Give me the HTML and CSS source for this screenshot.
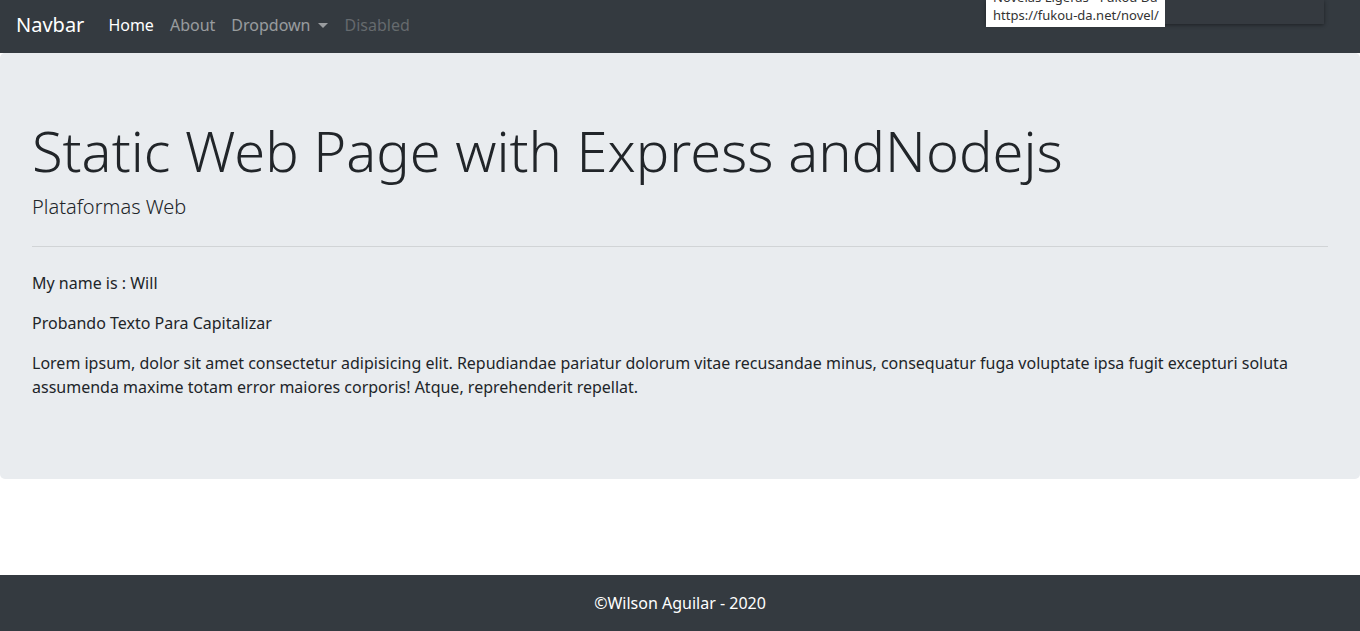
FILE: index.html
```html
<!DOCTYPE html>
<html lang="es">
<head>
<meta charset="utf-8">
<title>Static Web Page</title>
<link rel="stylesheet" href="styles.css">
</head>
<body>
<div class="page">
  <nav class="navbar">
    <a class="brand" href="#">Navbar</a>
    <ul class="nav">
      <li><a class="nav-link active" href="#">Home</a></li>
      <li><a class="nav-link" href="#">About</a></li>
      <li><a class="nav-link dropdown" href="#">Dropdown</a></li>
      <li><a class="nav-link disabled" href="#">Disabled</a></li>
    </ul>
  </nav>

  <main class="jumbotron">
    <h1 class="display">Static Web Page with Express andNodejs</h1>
    <p class="lead">Plataformas Web</p>
    <hr class="divider">
    <p>My name is : Will</p>
    <p>Probando Texto Para Capitalizar</p>
    <p>Lorem ipsum, dolor sit amet consectetur adipisicing elit. Repudiandae pariatur dolorum vitae recusandae minus, consequatur fuga voluptate ipsa fugit excepturi soluta assumenda maxime totam error maiores corporis! Atque, reprehenderit repellat.</p>
  </main>

  <footer class="footer">©Wilson Aguilar - 2020</footer>
</div>

<div class="tip-shadow"></div>
<div class="tooltip">
  <span class="tip-line">Novelas Ligeras - Fukou Da</span>
  <span class="tip-line">https://fukou-da.net/novel/</span>
</div>
</body>
</html>
```

FILE: styles.css
```css
* { box-sizing: border-box; }

html, body {
  margin: 0;
  padding: 0;
}

body {
  font-family: "Noto Sans", "Liberation Sans", sans-serif;
  font-size: 16px;
  line-height: 1.5;
  color: #212529;
  background: #fff;
}

.page {
  min-height: 100vh;
  display: flex;
  flex-direction: column;
}

.navbar {
  height: 53px;
  background: #343a40;
  display: flex;
  align-items: center;
  padding: 0 16px 4px;
}

.brand {
  font-size: 20px;
  line-height: 30px;
  color: #fff;
  text-decoration: none;
  margin-right: 16px;
}

.nav {
  list-style: none;
  margin: 0;
  padding: 0;
  display: flex;
}

.nav-link {
  display: block;
  padding: 8px 8px;
  color: rgba(255, 255, 255, 0.5);
  text-decoration: none;
}

.nav-link.active { color: #fff; }
.nav-link.disabled { color: rgba(255, 255, 255, 0.25); }

.nav-link.dropdown::after {
  content: "";
  display: inline-block;
  margin-left: 8px;
  vertical-align: 3px;
  border-top: 5px solid;
  border-left: 5px solid transparent;
  border-right: 5px solid transparent;
}

.jumbotron {
  background: #e9ecef;
  border-radius: 5px;
  padding: 64px 32px;
  margin-bottom: 32px;
}

.display {
  margin: 0 0 8px;
  font-size: 56px;
  font-weight: 300;
  line-height: 1.2;
}

.lead {
  margin: 0;
  font-size: 20px;
  font-weight: 300;
  line-height: 1.5;
}

.divider {
  margin: 24px 0;
  border: 0;
  border-top: 1px solid rgba(0, 0, 0, 0.1);
}

.jumbotron p { margin: 0 0 16px; }
.jumbotron .lead { margin: 0; }

.footer {
  margin-top: auto;
  height: 56px;
  background: #343a40;
  color: #fff;
  display: flex;
  align-items: center;
  justify-content: center;
}

.tip-shadow {
  position: absolute;
  top: 0;
  left: 986px;
  width: 338px;
  height: 24px;
  background: #353a40;
  box-shadow: 0 1px 4px rgba(0, 0, 0, 0.45);
}

.tooltip {
  position: absolute;
  top: -12px;
  left: 986px;
  width: 179px;
  height: 39px;
  background: #fff;
  color: #333;
  font-size: 13px;
  line-height: 18px;
  padding: 0 7px;
  display: flex;
  flex-direction: column;
  white-space: nowrap;
  overflow: hidden;
}
```
